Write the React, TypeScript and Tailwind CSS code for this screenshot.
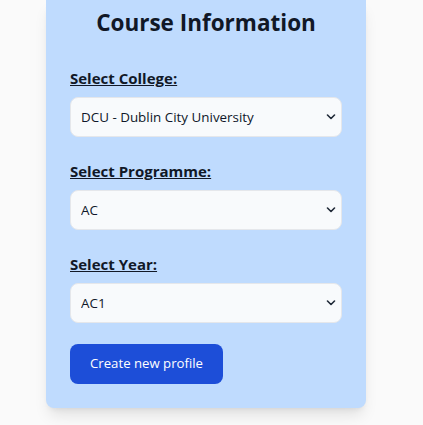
import React from "react";

const fields = [
  { label: "Select College:", value: "DCU - Dublin City University" },
  { label: "Select Programme:", value: "AC" },
  { label: "Select Year:", value: "AC1" },
];

const Chevron = () => (
  <svg
    className="pointer-events-none absolute right-[6px] top-1/2 h-[6px] w-[10px] -translate-y-1/2"
    viewBox="0 0 10 6"
    fill="none"
  >
    <polyline points="1.5,1 5,4.5 8.5,1" stroke="#1f2937" strokeWidth="1.6" strokeLinecap="round" strokeLinejoin="round" />
  </svg>
);

export default function App() {
  const [values, setValues] = React.useState<string[]>(fields.map((f) => f.value));

  return (
    <div className="min-h-screen bg-[#fafafa] font-['Segoe_UI','Open_Sans',sans-serif] text-[#111827]">
      <div className="ml-[46px] w-[320px] rounded-b-lg bg-[#bfdbfe] px-6 pb-6 pt-[7px] shadow-lg">
        <h2 className="text-center text-[22.5px] font-bold leading-8">Course Information</h2>
        <div className="mt-[29px] flex flex-col gap-6">
          {fields.map((f, i) => (
            <div key={f.label}>
              <label className="mb-2 block text-[15px] font-bold leading-[21px] underline">{f.label}</label>
              <div className="relative">
                <select
                  className="h-10 w-full appearance-none rounded-lg border border-[#e5e7eb] bg-[#f8fafc] pl-[10px] text-[13.4px] text-[#0f172a] outline-none"
                  value={values[i]}
                  onChange={(e) => setValues(values.map((v, j) => (j === i ? e.target.value : v)))}
                >
                  <option>{f.value}</option>
                </select>
                <Chevron />
              </div>
            </div>
          ))}
        </div>
        <button className="mt-[21px] h-10 rounded-lg bg-[#1d4ed8] px-5 text-[13.2px] text-white">Create new profile</button>
      </div>
    </div>
  );
}
